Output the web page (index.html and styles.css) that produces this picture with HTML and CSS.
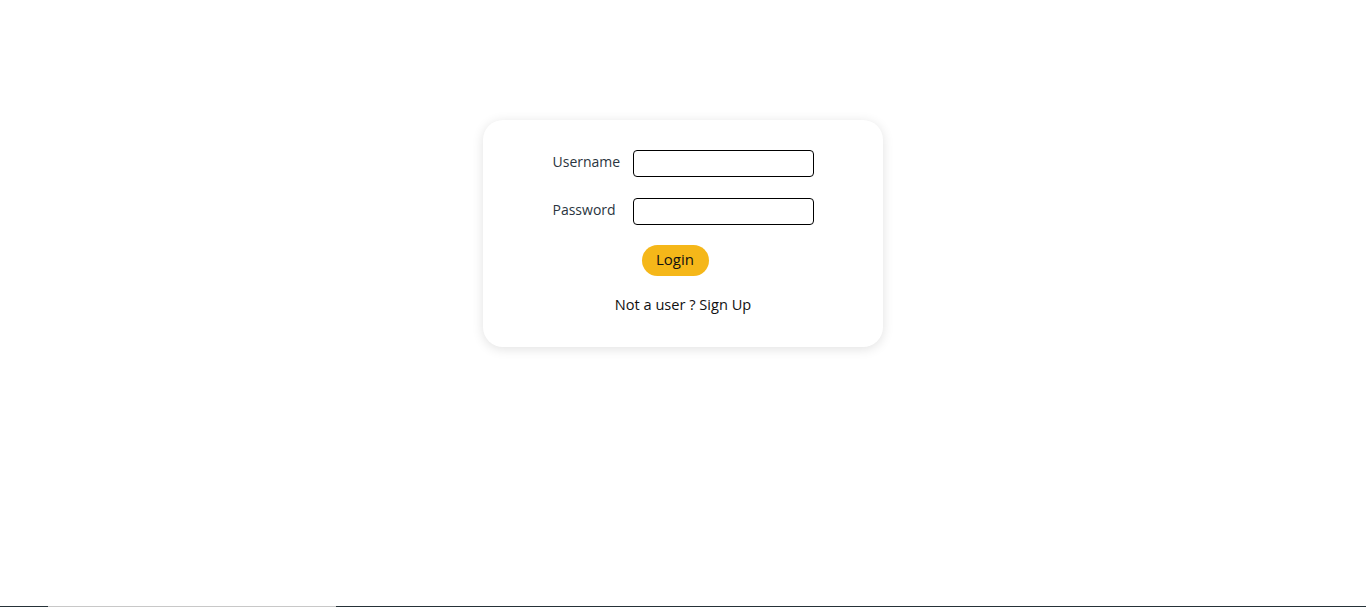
FILE: index.html
```html
<!DOCTYPE html>
<html>
<head>
<meta charset="utf-8">
<link rel="stylesheet" href="styles.css">
</head>
<body>
<main class="page">
  <form class="card">
    <div class="fields">
      <label class="label" for="u">Username</label>
      <input class="input" id="u" type="text">
      <label class="label" for="p">Password</label>
      <input class="input" id="p" type="password">
    </div>
    <button class="btn" type="button">Login</button>
    <p class="signup">Not a user ? Sign Up</p>
  </form>
</main>
<div class="bottom"><span class="seg dark a"></span><span class="seg light"></span><span class="seg dark b"></span></div>
</body>
</html>
```
FILE: styles.css
```css
html, body { margin: 0; padding: 0; background: #fff; }
body {
  font-family: "Open Sans", "Noto Sans", sans-serif;
  height: 607px;
  overflow: hidden;
  position: relative;
}
.page {
  display: flex;
  justify-content: center;
  padding-top: 120px;
}
.card {
  width: 400px;
  height: 227px;
  box-sizing: border-box;
  border-radius: 20px;
  background: #fff;
  box-shadow: 0 2px 12px rgba(0,0,0,0.12);
  display: flex;
  flex-direction: column;
  align-items: center;
  padding-top: 30px;
}
.fields {
  display: grid;
  grid-template-columns: 68px 181px;
  column-gap: 12px;
  row-gap: 21px;
  align-items: center;
}
.label {
  font-size: 14px;
  font-weight: 500;
  color: #2a3540;
  line-height: 20px;
  margin-top: -4px;
}
.input {
  width: 181px;
  height: 27px;
  box-sizing: border-box;
  border: 1px solid #000;
  border-radius: 4px;
  margin: 0;
  padding: 0 6px;
}
.btn {
  margin-top: 20px;
  margin-left: -16px;
  width: 67px;
  height: 31px;
  border: none;
  border-radius: 16px;
  background: #f5b719;
  color: #111;
  font-family: inherit;
  font-size: 15px;
  font-weight: 500;
  padding: 0 0 3px;
}
.signup {
  margin: 12px 0 0;
  font-size: 14.6px;
  font-weight: 500;
  color: #111;
  line-height: 32px;
}
.bottom {
  position: absolute;
  left: 0; right: 0; bottom: 0;
  height: 1px;
  display: flex;
}
.seg { height: 1px; }
.dark { background: #263238; }
.a { width: 48px; }
.light { width: 288px; background: #c8c8c8; }
.b { flex: 1; }
```
